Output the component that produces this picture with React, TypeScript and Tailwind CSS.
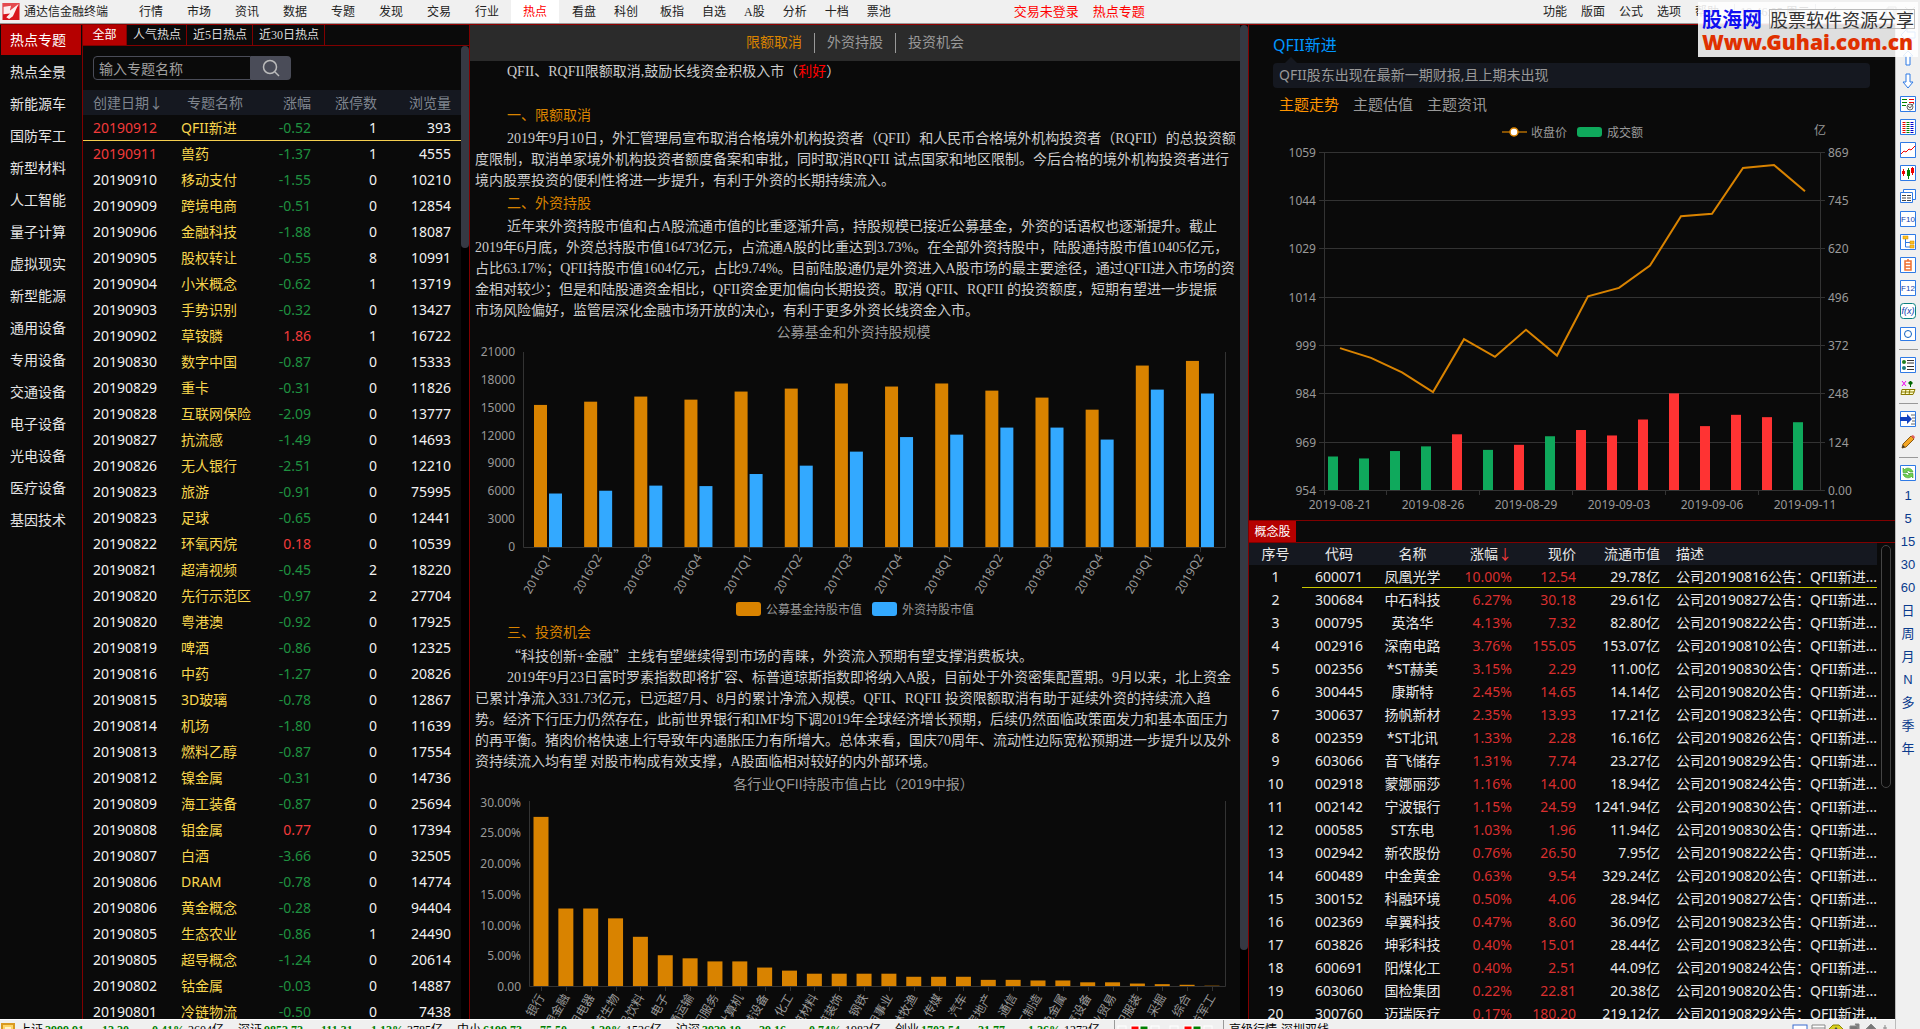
import { useState } from "react";
import clsx from "clsx";

const SONG = "font-['Liberation_Serif','Noto_Sans_CJK_SC',sans-serif]";
const HEI = "font-['Noto_Sans','Noto_Sans_CJK_SC',sans-serif]";

const MENU = ["行情", "市场", "资讯", "数据", "专题", "发现", "交易", "行业", "热点"];
const MENU_VIEWS = ["看盘", "科创"];
const MENU_TOOLS = ["板指", "自选", "A股", "分析", "十档", "票池"];
const MENU_RIGHT = ["功能", "版面", "公式", "选项", "帮助"];

const CATEGORIES = [
  "热点专题", "热点全景", "新能源车", "国防军工", "新型材料", "人工智能", "量子计算", "虚拟现实",
  "新型能源", "通用设备", "专用设备", "交通设备", "电子设备", "光电设备", "医疗设备", "基因技术",
];

const RANGES = ["全部", "人气热点", "近5日热点", "近30日热点"];

type Topic = [date: string, name: string, change: string, limitUps: number, views: number];

const TOPICS: Topic[] = [
  ["20190912", "QFII新进", "-0.52", 1, 393],
  ["20190911", "兽药", "-1.37", 1, 4555],
  ["20190910", "移动支付", "-1.55", 0, 10210],
  ["20190909", "跨境电商", "-0.51", 0, 12854],
  ["20190906", "金融科技", "-1.88", 0, 18087],
  ["20190905", "股权转让", "-0.55", 8, 10991],
  ["20190904", "小米概念", "-0.62", 1, 13719],
  ["20190903", "手势识别", "-0.32", 0, 13427],
  ["20190902", "草铵膦", "1.86", 1, 16722],
  ["20190830", "数字中国", "-0.87", 0, 15333],
  ["20190829", "重卡", "-0.31", 0, 11826],
  ["20190828", "互联网保险", "-2.09", 0, 13777],
  ["20190827", "抗流感", "-1.49", 0, 14693],
  ["20190826", "无人银行", "-2.51", 0, 12210],
  ["20190823", "旅游", "-0.91", 0, 75995],
  ["20190823", "足球", "-0.65", 0, 12441],
  ["20190822", "环氧丙烷", "0.18", 0, 10539],
  ["20190821", "超清视频", "-0.45", 2, 18220],
  ["20190820", "先行示范区", "-0.97", 2, 27704],
  ["20190820", "粤港澳", "-0.92", 0, 17925],
  ["20190819", "啤酒", "-0.86", 0, 12325],
  ["20190816", "中药", "-1.27", 0, 20826],
  ["20190815", "3D玻璃", "-0.78", 0, 12867],
  ["20190814", "机场", "-1.80", 0, 11639],
  ["20190813", "燃料乙醇", "-0.87", 0, 17554],
  ["20190812", "镍金属", "-0.31", 0, 14736],
  ["20190809", "海工装备", "-0.87", 0, 25694],
  ["20190808", "钼金属", "0.77", 0, 17394],
  ["20190807", "白酒", "-3.66", 0, 32505],
  ["20190806", "DRAM", "-0.78", 0, 14774],
  ["20190806", "黄金概念", "-0.28", 0, 94404],
  ["20190805", "生态农业", "-0.86", 1, 24490],
  ["20190805", "超导概念", "-1.24", 0, 20614],
  ["20190802", "钴金属", "-0.03", 0, 14887],
  ["20190801", "冷链物流", "-0.50", 0, 7438],
];

type Stock = [code: string, name: string, change: string, price: string, cap: string, date: string];

const STOCKS: Stock[] = [
  ["600071", "凤凰光学", "10.00%", "12.54", "29.78亿", "20190816"],
  ["300684", "中石科技", "6.27%", "30.18", "29.61亿", "20190827"],
  ["000795", "英洛华", "4.13%", "7.32", "82.80亿", "20190822"],
  ["002916", "深南电路", "3.76%", "155.05", "153.07亿", "20190810"],
  ["002356", "*ST赫美", "3.15%", "2.29", "11.00亿", "20190830"],
  ["300445", "康斯特", "2.45%", "14.65", "14.14亿", "20190820"],
  ["300637", "扬帆新材", "2.35%", "13.93", "17.21亿", "20190823"],
  ["002359", "*ST北讯", "1.33%", "2.28", "16.16亿", "20190826"],
  ["603066", "音飞储存", "1.31%", "7.74", "23.27亿", "20190829"],
  ["002918", "蒙娜丽莎", "1.16%", "14.00", "18.94亿", "20190824"],
  ["002142", "宁波银行", "1.15%", "24.59", "1241.94亿", "20190830"],
  ["000585", "ST东电", "1.03%", "1.96", "11.94亿", "20190830"],
  ["002942", "新农股份", "0.76%", "26.50", "7.95亿", "20190822"],
  ["600489", "中金黄金", "0.63%", "9.54", "329.24亿", "20190820"],
  ["300152", "科融环境", "0.50%", "4.06", "28.94亿", "20190827"],
  ["002369", "卓翼科技", "0.47%", "8.60", "36.09亿", "20190823"],
  ["603826", "坤彩科技", "0.40%", "15.01", "28.44亿", "20190823"],
  ["600691", "阳煤化工", "0.40%", "2.51", "44.09亿", "20190824"],
  ["603060", "国检集团", "0.22%", "22.81", "20.38亿", "20190820"],
  ["300760", "迈瑞医疗", "0.17%", "180.20", "219.12亿", "20190829"],
];

const QUARTERS: [string, number, number][] = [
  ["2016Q1", 15300, 5760],
  ["2016Q2", 15650, 6060],
  ["2016Q3", 16200, 6610],
  ["2016Q4", 15870, 6560],
  ["2017Q1", 16740, 7860],
  ["2017Q2", 17060, 8760],
  ["2017Q3", 17610, 10270],
  ["2017Q4", 17280, 11840],
  ["2018Q1", 17610, 12100],
  ["2018Q2", 16840, 12860],
  ["2018Q3", 16090, 12860],
  ["2018Q4", 14790, 11570],
  ["2019Q1", 19540, 16950],
  ["2019Q2", 20040, 16530],
];

const INDUSTRIES: [string, number][] = [
  ["银行", 27.5], ["非银金融", 12.6], ["家用电器", 12.6], ["医药生物", 11], ["食品饮料", 8],
  ["电子", 5], ["交通运输", 4.5], ["休闲服务", 4], ["计算机", 4], ["机械设备", 3],
  ["化工", 2.5], ["建筑材料", 2], ["建筑装饰", 2], ["钢铁", 2], ["公用事业", 2],
  ["农林牧渔", 1.5], ["传媒", 1.5], ["汽车", 1.5], ["房地产", 1], ["通信", 1],
  ["轻工制造", 0.9], ["有色金属", 0.9], ["电气设备", 0.6], ["商业贸易", 0.6], ["纺织服装", 0.4],
  ["采掘", 0.3], ["综合", 0.2], ["国防军工", 0.05],
];

// closing price, turnover (亿), 1 = up day
const TREND: [number, number, 0 | 1][] = [
  [998, 86, 0], [995, 81, 0], [990.5, 100, 0], [984.4, 112, 0],
  [1000.8, 143, 1], [995.3, 103, 0], [1003.7, 116, 1], [995.7, 138, 0],
  [1014.1, 154, 1], [1016.7, 140, 1], [1023.6, 181, 1], [1038.9, 248, 1],
  [1039.7, 164, 1], [1053.9, 193, 1], [1054.8, 187, 1], [1046.7, 174, 0],
];

const INDEXES = [
  ["上证", "2999.91", "-12.20", "-0.41%", "2604亿"],
  ["深证", "9852.72", "-111.31", "-1.12%", "3785亿"],
  ["中小", "6199.73", "-75.50", "-1.20%", "1526亿"],
  ["沪深", "3929.19", "-29.16", "-0.74%", "1982亿"],
  ["创业", "1703.54", "-21.77", "-1.26%", "1273亿"],
];

function MenuBar() {
  return (
    <header className={`flex h-[23px] shrink-0 items-center bg-[#f0f0f0] text-xs text-[#222] ${SONG}`}>
      <div className="flex w-[127px] items-center gap-1 pl-[2px]">
        <svg viewBox="0 0 18 18" className="h-[17px] w-[18px]">
          <rect width="18" height="18" fill="#d8141c" />
          <path d="M0 0H18V3L9 8L8 3L0 4Z" fill="#f08080" opacity=".5" />
          <path d="M1 4L9 3L8 8L17 1L11 14L7 17L4 15L8 11L1 12Z" fill="#fff" opacity=".92" />
        </svg>
        <span className="whitespace-nowrap">通达信金融终端</span>
      </div>
      <nav className="flex h-full gap-1">
        <div className="flex">
          {MENU.map((m) => (
            <button
              key={m}
              className={clsx("h-full w-12", m === "热点" && "bg-white text-[#f00]")}
            >
              {m}
            </button>
          ))}
        </div>
        <div className="flex">
          {MENU_VIEWS.map((m) => (
            <button key={m} className="h-full px-[9px]">{m}</button>
          ))}
        </div>
        <div className="flex">
          {MENU_TOOLS.map((m) => (
            <button key={m} className="h-full px-[9px]">{m}</button>
          ))}
        </div>
      </nav>
      <div className="ml-[114px] flex gap-[14px] text-[13px] text-[#f00]">
        <a href="#login">交易未登录</a>
        <a href="#topics">热点专题</a>
      </div>
      <div className="ml-auto flex h-full items-center">
        {MENU_RIGHT.map((m) => (
          <button key={m} className="h-full w-[38px]">{m}</button>
        ))}
        <span className="ml-2 w-[82px] border-x border-gray-400 text-center">19:46:05 周二</span>
        <svg viewBox="0 0 104 20" className="h-5 w-[104px]" stroke="#777" fill="none">
          <path d="M14 10l6-5M46 12h10M70 7h8v8h-8zM72 7V5h8v8h-2M89 5l10 9M99 5l-10 9" />
        </svg>
      </div>
    </header>
  );
}

function CategoryNav() {
  const [active, setActive] = useState("热点专题");
  return (
    <nav className={`flex flex-col gap-[2px] overflow-hidden px-px text-sm text-[#e4e4e4] ${SONG}`}>
      {CATEGORIES.map((c) => (
        <button
          key={c}
          onClick={() => setActive(c)}
          className={clsx("h-[30px] shrink-0 pt-[2px] pr-[6px]", c === active && "bg-[#b50000] text-white")}
        >
          {c}
        </button>
      ))}
    </nav>
  );
}

function TopicList() {
  return (
    <section className="flex min-h-0 flex-col overflow-hidden border-l border-[#800000]">
      <div className={`flex h-[21px] shrink-0 border-b border-[#800000] text-xs text-[#ddd] ${SONG}`}>
        {RANGES.map((r, i) => (
          <button
            key={r}
            className={clsx("border-r border-[#800000]", i === 0 ? "w-11 bg-[#b50000] text-white" : "pr-[5px] pl-[6px]")}
          >
            {r}
          </button>
        ))}
      </div>
      <div className="flex min-h-0 flex-1">
        <div className={`min-w-0 flex-1 ${HEI}`}>
          <div className="flex h-11 pt-[10px] pl-[10px]">
            <input
              aria-label="专题名称"
              placeholder="输入专题名称"
              className="h-6 w-[158px] rounded-l border border-[#4a4c58] bg-[#0a0a0a] px-[5px] text-sm text-gray-300 placeholder:text-[#a0a0a0]"
            />
            <button aria-label="搜索" className="flex h-6 w-10 items-center justify-center rounded-r bg-[#4a4c58]">
              <svg viewBox="0 0 18 18" className="h-[18px] w-[18px]" fill="none" stroke="#bbb" strokeWidth="1.5">
                <circle cx="8" cy="8" r="6.5" />
                <path d="M13 13l4 4" />
              </svg>
            </button>
          </div>
          <table className="w-full table-fixed border-collapse text-sm">
            <colgroup>
              <col className="w-[98px]" />
              <col className="w-[90px]" />
              <col className="w-[40px]" />
              <col className="w-[66px]" />
              <col />
            </colgroup>
            <thead>
              <tr className="h-[25px] bg-[#151820] text-[#7f858f]">
                <th className="p-0 pl-[10px] text-left font-normal">创建日期↓</th>
                <th className="p-0 pl-[6px] text-left font-normal">专题名称</th>
                <th className="p-0 text-right font-normal whitespace-nowrap">涨幅</th>
                <th className="p-0 text-right font-normal">涨停数</th>
                <th className="p-0 pr-[10px] text-right font-normal">浏览量</th>
              </tr>
            </thead>
            <tbody className="text-[#f2f2f2]">
              {TOPICS.map(([date, name, change, ups, views], i) => (
                <tr key={name} className={clsx("h-[26px]", i === 0 && "shadow-[inset_0_-1px_#f5cf4f]")}>
                  <td className={clsx("p-0 pl-[10px] leading-6", i < 2 && "text-[#f23a3a]")}>{date}</td>
                  <td className="p-0 leading-6 whitespace-nowrap text-[#f8d64e]">{name}</td>
                  <td
                    className={clsx(
                      "p-0 text-right leading-6",
                      change.startsWith("-") ? "text-[#1f9140]" : "text-[#f23a3a]"
                    )}
                  >
                    {change}
                  </td>
                  <td className="p-0 text-right leading-6">{ups}</td>
                  <td className="p-0 pr-[10px] text-right leading-6">{views}</td>
                </tr>
              ))}
            </tbody>
          </table>
        </div>
        <div className="w-2 bg-black">
          <div className="h-[202px] rounded-full bg-[#363943]" />
        </div>
      </div>
    </section>
  );
}

function FundChart() {
  const y = (v: number) => 202 - (v / 21000) * 195;
  return (
    <svg viewBox="0 0 770 275" className={`block w-full text-xs ${HEI}`} fill="#999">
      <path d="M53.5 7V202.5H755.5V7" fill="none" stroke="#333" />
      {[0, 3000, 6000, 9000, 12000, 15000, 18000, 21000].map((v) => (
        <text key={v} x="45" y={y(v) + 4} textAnchor="end">{v}</text>
      ))}
      {QUARTERS.map(([q, fund, foreign], i) => {
        const cx = 78 + i * 50.15;
        return (
          <g key={q}>
            <rect x={cx - 14} y={y(fund)} width="13" height={202 - y(fund)} fill="#d98300" />
            <rect x={cx + 1} y={y(foreign)} width="13" height={202 - y(foreign)} fill="#33a9ff" />
            <path d={`M${Math.round(cx)}.5 203v4`} stroke="#333" />
            <text textAnchor="end" transform={`translate(${cx + 4} 212) rotate(-60)`}>{q}</text>
          </g>
        );
      })}
      <rect x="266" y="257" width="25" height="14" rx="3" fill="#d98300" />
      <text x="296" y="269">公募基金持股市值</text>
      <rect x="402" y="257" width="25" height="14" rx="3" fill="#33a9ff" />
      <text x="432" y="269">外资持股市值</text>
    </svg>
  );
}

function IndustryChart() {
  const y = (v: number) => 189 - (v / 30) * 184.5;
  return (
    <svg viewBox="0 0 770 260" className={`block w-full text-xs ${HEI}`} fill="#999">
      <path d="M59.5 4V189.5H755.5V4" fill="none" stroke="#333" />
      {[0, 5, 10, 15, 20, 25, 30].map((v) => (
        <text key={v} x="51" y={y(v) + 5} textAnchor="end">{v ? `${v}.00%` : "0.00"}</text>
      ))}
      {INDUSTRIES.map(([name, pct], i) => {
        const cx = 71 + i * 24.85;
        return (
          <g key={name}>
            <rect x={cx - 7.5} y={y(pct)} width="15" height={189 - y(pct)} fill="#d98300" />
            <path d={`M${Math.round(cx)}.5 190v4`} stroke="#333" />
            <text textAnchor="end" transform={`translate(${cx + 4} 200) rotate(-60)`}>{name}</text>
          </g>
        );
      })}
    </svg>
  );
}

function Heading({ children }: { children: string }) {
  return <h2 className="mt-px pl-8 leading-6 text-[#d98300]">{children}</h2>;
}

function Article() {
  return (
    <section className="flex min-h-0 overflow-hidden border-l border-[#800000]">
      <div className={`min-w-0 flex-1 text-sm text-[#ccc] ${SONG}`}>
        <nav className="flex h-9 items-center justify-center bg-[#2b2b2b] text-[#999]">
          <a href="#quota" className="border-r border-[#999] px-3 text-[#d98300]">限额取消</a>
          <a href="#holding" className="border-r border-[#999] px-3">外资持股</a>
          <a href="#chance" className="px-3">投资机会</a>
        </nav>
        <div className="pl-[5px] leading-[21px] whitespace-nowrap">
          <p className="pb-[21px] pl-8">
            QFII、RQFII限额取消,鼓励长线资金积极入市（<span className="text-[#f00]">利好</span>）
          </p>
          <Heading>一、限额取消</Heading>
          <p className="indent-8">
            2019年9月10日，外汇管理局宣布取消合格境外机构投资者（QFII）和人民币合格境外机构投资者（RQFII）的总投资额<br />
            度限制，取消单家境外机构投资者额度备案和审批，同时取消RQFII 试点国家和地区限制。今后合格的境外机构投资者进行<br />
            境内股票投资的便利性将进一步提升，有利于外资的长期持续流入。
          </p>
          <Heading>二、外资持股</Heading>
          <p className="indent-8">
            近年来外资持股市值和占A股流通市值的比重逐渐升高，持股规模已接近公募基金，外资的话语权也逐渐提升。截止<br />
            2019年6月底，外资总持股市值16473亿元，占流通A股的比重达到3.73%。在全部外资持股中，陆股通持股市值10405亿元，<br />
            占比63.17%；QFII持股市值1604亿元，占比9.74%。目前陆股通仍是外资进入A股市场的最主要途径，通过QFII进入市场的资<br />
            金相对较少；但是和陆股通资金相比，QFII资金更加偏向长期投资。取消 QFII、RQFII 的投资额度，短期有望进一步提振<br />
            市场风险偏好，监管层深化金融市场开放的决心，有利于更多外资长线资金入市。
          </p>
          <h3 className="pr-2 text-center leading-6 text-[#999]">公募基金和外资持股规模</h3>
        </div>
        <FundChart />
        <div className="pl-[5px] leading-[21px] whitespace-nowrap">
          <Heading>三、投资机会</Heading>
          <p className="pl-8">
            <span className="font-['Noto_Sans_CJK_SC']">“</span>科技创新+金融
            <span className="font-['Noto_Sans_CJK_SC']">”</span>主线有望继续得到市场的青睐，外资流入预期有望支撑消费板块。
          </p>
          <p className="indent-8">
            2019年9月23日富时罗素指数即将扩容、标普道琼斯指数即将纳入A股，目前处于外资密集配置期。9月以来，北上资金<br />
            已累计净流入331.73亿元，已远超7月、8月的累计净流入规模。QFII、RQFII 投资限额取消有助于延续外资的持续流入趋<br />
            势。经济下行压力仍然存在，此前世界银行和IMF均下调2019年全球经济增长预期，后续仍然面临政策面发力和基本面压力<br />
            的再平衡。猪肉价格快速上行导致年内通胀压力有所增大。总体来看，国庆70周年、流动性边际宽松预期进一步提升以及外<br />
            资持续流入均有望 对股市构成有效支撑，A股面临相对较好的内外部环境。
          </p>
          <h3 className="pr-2 text-center leading-6 text-[#999]">
            各行业<span className="font-['Liberation_Sans']">QFII</span>持股市值占比（
            <span className="font-['Liberation_Sans']">2019</span>中报）
          </h3>
        </div>
        <IndustryChart />
      </div>
      <div className="w-2 bg-black">
        <div className="h-[925px] rounded-full bg-[#363943]" />
      </div>
    </section>
  );
}

function TrendChart() {
  const price = (v: number) => 366 - ((v - 954) / 105) * 338.5;
  const vol = (v: number) => 366 - (v / 869) * 338.5;
  const x = (i: number) => 91 + i * 31;
  return (
    <svg viewBox="0 0 646 396" className="block w-full text-xs" fill="#999">
      <path d="M253 8h25" stroke="#d98300" strokeWidth="2" opacity=".6" />
      <circle cx="265" cy="8" r="4" fill="#fff" stroke="#d98300" strokeWidth="1.5" />
      <text x="282" y="13">收盘价</text>
      <rect x="328" y="3" width="25" height="10" rx="3" fill="#0fa95c" />
      <text x="358" y="13">成交额</text>
      <text x="565" y="11">亿</text>
      {[954, 969, 984, 999, 1014, 1029, 1044, 1059].map((v, i) => {
        const gy = Math.round(price(v)) + 0.5;
        return (
          <g key={v}>
            <path d={`M70 ${gy}H576`} stroke="#333" />
            <text x="67" y={gy + 4} textAnchor="end">{v}</text>
            <text x="579" y={gy + 4}>{["0.00", 124, 248, 372, 496, 620, 745, 869][i]}</text>
          </g>
        );
      })}
      <path d="M75.5 28V366M571.5 28V366M75.5 366v5" stroke="#333" fill="none" />
      {[137, 230, 323, 416, 509].map((t) => (
        <path key={t} d={`M${t}.5 366v5`} stroke="#333" />
      ))}
      {TREND.map(([, v, up], i) => (
        <rect key={i} x={x(i) - 12} y={vol(v)} width="10" height={366 - vol(v)} fill={up ? "#ff3333" : "#0fa95c"} />
      ))}
      <polyline
        points={TREND.map(([p], i) => `${x(i)},${price(p)}`).join(" ")}
        fill="none"
        stroke="#d98300"
        strokeWidth="2"
      />
      {["2019-08-21", "2019-08-26", "2019-08-29", "2019-09-03", "2019-09-06", "2019-09-11"].map((d, i) => (
        <text key={d} x={91 + i * 93} y="385" textAnchor="middle">{d}</text>
      ))}
    </svg>
  );
}

function Detail() {
  return (
    <section className={`flex min-h-0 flex-col overflow-hidden border-l border-[#800000] ${HEI}`}>
      <div className="shrink-0 pr-[25px] pl-6">
        <h1 className="pt-2 text-base leading-6 text-[#0096ff]">QFII新进</h1>
        <div className="pl-3">
          <div className="h-[6px] w-[12px] bg-[#151820] [clip-path:polygon(50%_0,100%_100%,0_100%)]" />
        </div>
        <p className="h-[25px] rounded bg-[#151820] pl-[6px] text-sm leading-6 text-[#999]">
          QFII股东出现在最新一期财报,且上期未出现
        </p>
        <nav className="flex gap-[14px] pt-1 pb-2 pl-[6px] text-[15px] leading-6 text-[#999]">
          <a href="#trend" className="text-[#ff9500]">主题走势</a>
          <a href="#value">主题估值</a>
          <a href="#news">主题资讯</a>
        </nav>
      </div>
      <div className="shrink-0">
        <TrendChart />
      </div>
      <div className={`flex h-[23px] shrink-0 border-y border-[#800000] text-xs ${SONG}`}>
        <button className="w-[47px] bg-[#b50000] text-white">概念股</button>
      </div>
      <div className="flex min-h-0 flex-1 overflow-hidden">
        <table className="min-w-0 flex-1 table-fixed border-collapse self-start text-sm text-[#e8e8e8]">
          <colgroup>
            <col className="w-[53px]" />
            <col className="w-[74px]" />
            <col className="w-[73px]" />
            <col className="w-[63px]" />
            <col className="w-[64px]" />
            <col className="w-[84px]" />
            <col />
          </colgroup>
          <thead>
            <tr className="h-[22px] bg-[#151820] leading-[22px] whitespace-nowrap">
              <th className="p-0 font-normal">序号</th>
              <th className="p-0 font-normal">代码</th>
              <th className="p-0 font-normal">名称</th>
              <th className="p-0 text-right font-normal">涨幅<span className="text-[#f23a3a]">↓</span></th>
              <th className="p-0 text-right font-normal">现价</th>
              <th className="p-0 text-right font-normal">流通市值</th>
              <th className="p-0 pl-4 text-left font-normal">描述</th>
            </tr>
          </thead>
          <tbody>
            {STOCKS.map(([code, name, change, price, cap, date], i) => (
              <tr
                key={code}
                className={clsx(
                  "h-[23px] leading-[22px] whitespace-nowrap",
                  i === 0 && "[&>td+td]:shadow-[inset_0_-1px_#c8c800]"
                )}
              >
                <td className="p-0 text-center">{i + 1}</td>
                <td className="p-0 text-center">{code}</td>
                <td className="p-0 text-center">{name}</td>
                <td className="p-0 text-right text-[#d92f2f]">{change}</td>
                <td className="p-0 text-right text-[#d92f2f]">{price}</td>
                <td className="p-0 text-right">{cap}</td>
                <td className="p-0 pl-4">公司{date}公告：QFII新进...</td>
              </tr>
            ))}
          </tbody>
        </table>
        <div className="w-[18px] pt-[2px] pl-1">
          <div className="h-[243px] w-[10px] rounded-full border border-[#444]" />
        </div>
      </div>
    </section>
  );
}

function StatusBar() {
  return (
    <footer className={`h-[10px] shrink-0 overflow-hidden border-t border-white bg-[#f0f0f0] text-xs text-black ${SONG}`}>
      <div className="flex h-5 items-center">
        <svg viewBox="0 0 14 14" className="ml-px h-[14px] w-[14px]">
          <rect width="14" height="14" fill="#d99a20" />
          <rect x="2" y="2" width="10" height="10" fill="#ffd76a" />
          <rect x="4" y="4" width="6" height="4" fill="#fff3c8" />
        </svg>
        {INDEXES.map(([name, last, diff, pct, amount]) => (
          <div key={name} className="flex w-[219px] items-center pl-1">
            <span className="w-[26px]">{name}</span>
            <b className="w-[53px] text-[#008000]">{last}</b>
            <b className="w-[50px] text-[#008000]">{diff}</b>
            <b className="w-[40px] text-[#008000]">{pct}</b>
            <span>{amount}</span>
          </div>
        ))}
        <svg viewBox="0 0 112 20" className="mr-1 ml-[3px] h-5 w-[112px]">
          <path d="M1.5 0v20M110.5 0v20" stroke="#999" />
          {[5, 18, 27, 38, 57, 71, 80, 91].map((sx, i) => (
            <rect
              key={sx}
              x={sx}
              y="6"
              width="8"
              height="14"
              stroke="#fff"
              fill={i % 4 === 1 ? "#f00" : i % 4 === 2 ? "#008000" : "#f0f0f0"}
            />
          ))}
        </svg>
        <span>高级行情-深圳双线</span>
        <svg viewBox="0 0 104 20" className="ml-auto h-5 w-[104px]" fill="none" stroke="#888">
          <rect x="2" y="5" width="14" height="11" fill="#fff" stroke="#3a6ad0" />
          <path d="M21 5h13v11H21zM21 8h13M23 11h9" fill="#fff" />
          <path d="M42 5h6l4 4v6H38V9z" fill="#d8d020" stroke="#8a8400" />
          <path d="M42 11l3-4 3 4z" fill="#444" stroke="none" />
          <path d="M59 6h8v10h-8zM64 4h4v5z" fill="#777" />
          <path d="M80 4l5 5h-3v6h-4V9h-3zM94 5v10M92 8h4" fill="#777" />
        </svg>
      </div>
    </footer>
  );
}

const FRAME = <path d="M.5 .5h15v15H.5z" fill="#fff" stroke="#2f7ae5" />;

const TOOLS = [
  <path d="M1 8l6-6v3h8v6H7v3z" fill="#fff" stroke="#2f7ae5" />,
  <path d="M8 1l5 5h-3v9H6V6H3z" fill="#fff" stroke="#2f7ae5" />,
  <path d="M6 1h4v8h3l-5 6-5-6h3z" fill="#fff" stroke="#2f7ae5" />,
  <>
    {FRAME}
    <path d="M2 3.5h5M2 6.5h5M2 9.5h4" stroke="#008000" />
    <path d="M9 3.5h5M9 6.5h5" stroke="#e00" />
    <circle cx="10" cy="11" r="3" fill="#eee" stroke="#666" />
    <path d="M8 10l2 2 4-5" fill="none" stroke="#666" />
  </>,
  <>
    {FRAME}
    <path d="M4 3v11" stroke="#e00" strokeWidth="3" strokeDasharray="1 1" />
    <path d="M8 3v11" stroke="#008000" strokeWidth="3" strokeDasharray="1 1" />
    <path d="M12 3v11" stroke="#00c" strokeWidth="3" strokeDasharray="1 1" />
  </>,
  <>
    {FRAME}
    <path d="M1 12l3-3 2 1 3-3 2 1 4-4" fill="none" stroke="#e00" />
  </>,
  <>
    {FRAME}
    <path d="M3.5 4v7M12.5 2v8" stroke="#e00" />
    <path d="M8.5 3v11" stroke="#008000" />
    <path d="M2 6h3v3H2zM11 3h3v5h-3z" fill="#e00" />
    <path d="M7 5h3v6H7z" fill="#008000" />
  </>,
  <>
    <path d="M3.5 1.5h12v10h-12z" fill="#fff" stroke="#2f7ae5" />
    <path d="M.5 4.5h12v10H.5z" fill="#fff" stroke="#2f7ae5" />
    <path d="M2 7.5h4M7 7.5h4M2 10h4M7 10h4M2 12.5h4M7 12.5h4" stroke="#444" />
  </>,
  <>
    {FRAME}
    <text x="8" y="11" textAnchor="middle" fontSize="8" fill="#1040b0">F10</text>
  </>,
  <>
    {FRAME}
    <path d="M5.5 4v9H10M5.5 8.5H10" fill="none" stroke="#2f7ae5" />
    <path d="M3 2h5v3H3zM10 7h4v3h-4zM10 11h4v3h-4z" fill="#ffc020" stroke="#c88a00" strokeWidth=".5" />
  </>,
  <>
    {FRAME}
    <path d="M5 4h6v9H5zM5 7h6M5 10h6M8 2v2" fill="none" stroke="#f07030" strokeWidth="1.5" />
  </>,
  <>
    {FRAME}
    <text x="8" y="11" textAnchor="middle" fontSize="8" fill="#1040b0">F12</text>
  </>,
  <>
    <rect x=".5" y=".5" width="15" height="15" rx="3" fill="#fff" stroke="#0a8080" />
    <text x="8" y="11" textAnchor="middle" fontSize="9" fontStyle="italic" fill="#1040b0">f(x)</text>
  </>,
  <>
    <path d="M.5 1.5h15v13H.5z" fill="#fff" stroke="#2f7ae5" />
    <circle cx="8" cy="8" r="3.5" fill="none" stroke="#1060c0" />
  </>,
  null,
  <>
    {FRAME}
    <circle cx="4" cy="5" r="2" fill="#208020" />
    <circle cx="4" cy="11" r="2" fill="#208080" />
    <path d="M7 3.5h7M7 6h7M7 9.5h7M7 12.5h7" stroke="#333" />
  </>,
  <>
    <path d="M2 1l4 5M6 1L2 6" stroke="#e0e" />
    <path d="M10.5 1v6M9 2h3v2H9z" stroke="#060" fill="#060" />
    <path d="M2 9.5h13l-2 5H1zM1.5 12h13M6 9l-1 6M10 9l-1 6" fill="#ffc" stroke="#8a7a00" />
  </>,
  null,
  <>
    {FRAME}
    <path d="M0 6h7V3l5 5-5 5v-3H0z" fill="#1040c0" />
    <path d="M11 4h4M12 7h3M12 10h3M11 13h4" stroke="#666" />
  </>,
  <>
    <path d="M2 14l1-4 8-8 3 3-8 8z" fill="#f5a623" stroke="#8a5a10" />
    <path d="M11 2l2-1 2 2-1 2z" fill="#e06060" />
    <path d="M2 14l1-3 2 2z" fill="#333" />
  </>,
  null,
  <>
    {FRAME}
    <path d="M3 7.5V3l1.5 1.5C7 2 12 3 13 7h-3C9 5.500 8 5.500 6.500 6.500L8 7.500z" fill="#6fcf4f" stroke="#3a9a2a" strokeWidth=".6" />
    <path d="M13 8.500V13l-1.500-1.500C9 14 4 13 3 9h3c1 1.500 2 1.500 3.500.5L8 8.500z" fill="#6fcf4f" stroke="#3a9a2a" strokeWidth=".6" />
  </>,
];

const PERIODS = ["1", "5", "15", "30", "60", "日", "周", "月", "N", "多", "季", "年"];

function Toolbar() {
  return (
    <aside className="flex w-[25px] flex-col items-center overflow-hidden border-l border-[#bbb] bg-[#f0f0f0] font-['Liberation_Sans','Noto_Sans_CJK_SC',sans-serif] text-[13px] text-[#0a3a8c]">
      {TOOLS.map((icon, i) =>
        icon ? (
          <button key={i} className="flex h-[23px] w-full shrink-0 items-center justify-center">
            <svg viewBox="0 0 16 16" className="h-4 w-4">{icon}</svg>
          </button>
        ) : (
          <hr key={i} className="mt-1 mb-[3px] w-[19px] shrink-0 border-t border-[#999]" />
        )
      )}
      {PERIODS.map((p) => (
        <button key={p} className="h-[23px] w-full shrink-0">{p}</button>
      ))}
    </aside>
  );
}

function Watermark() {
  return (
    <div className="absolute top-[2px] right-[2px] h-[55px] w-[220px] bg-white/87 pl-1 whitespace-nowrap">
      <div className="flex items-center gap-[7px] pt-[5px]">
        <b className="font-['Noto_Sans_CJK_SC'] text-[20px] leading-6 text-[#1010f0]">股海网</b>
        <span className="border border-[#bbb] font-['Noto_Sans_CJK_SC'] text-[18px] leading-[18px] text-[#333]">
          股票软件资源分享
        </span>
      </div>
      <div className="font-['Noto_Sans'] text-[21px] leading-[22px] font-black text-[#e03000]">Www.Guhai.com.cn</div>
    </div>
  );
}

export default function App() {
  return (
    <div className="relative flex h-screen flex-col overflow-hidden bg-[#0a0a0a]">
      <MenuBar />
      <div className="flex min-h-0 flex-1">
        <div className="flex min-w-0 flex-1 flex-col border-t border-[#999]">
          <main className="grid min-h-0 flex-1 grid-cols-[82px_387px_779fr_647fr] grid-rows-[minmax(0,1fr)] border-t border-[#900000]">
            <CategoryNav />
            <TopicList />
            <Article />
            <Detail />
          </main>
          <StatusBar />
        </div>
        <Toolbar />
      </div>
      <Watermark />
    </div>
  );
}
